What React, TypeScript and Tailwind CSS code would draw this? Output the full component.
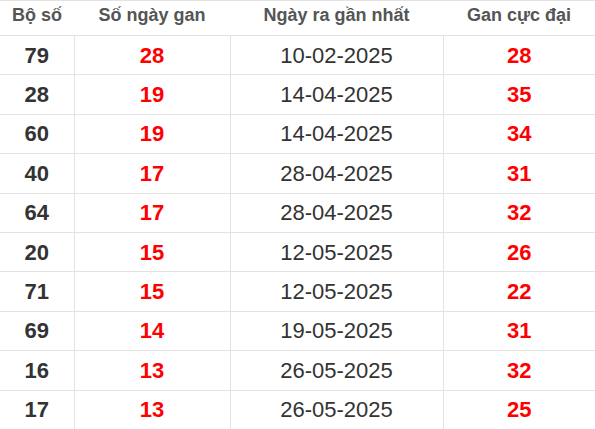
const rows = [
  ["79", "28", "10-02-2025", "28"],
  ["28", "19", "14-04-2025", "35"],
  ["60", "19", "14-04-2025", "34"],
  ["40", "17", "28-04-2025", "31"],
  ["64", "17", "28-04-2025", "32"],
  ["20", "15", "12-05-2025", "26"],
  ["71", "15", "12-05-2025", "22"],
  ["69", "14", "19-05-2025", "31"],
  ["16", "13", "26-05-2025", "32"],
  ["17", "13", "26-05-2025", "25"],
]

export default function App() {
  return (
    <div className="w-[595px] h-[429px] overflow-hidden bg-white font-['Liberation_Sans',Arial,sans-serif]">
      <table className="w-[595px] border-collapse table-fixed">
        <colgroup>
          <col className="w-[74px]" />
          <col className="w-[156px]" />
          <col className="w-[213px]" />
          <col className="w-[152px]" />
        </colgroup>
        <thead>
          <tr className="h-[35px] border-t border-b border-[#e3e3e3]">
            <th className="text-[18px] font-bold text-[#555] text-center align-middle pb-[6px]">Bộ số</th>
            <th className="text-[18px] font-bold text-[#555] text-center align-middle pb-[6px]">Số ngày gan</th>
            <th className="text-[18px] font-bold text-[#555] text-center align-middle pb-[6px]">Ngày ra gần nhất</th>
            <th className="text-[18px] font-bold text-[#555] text-center align-middle pb-[6px]">Gan cực đại</th>
          </tr>
        </thead>
        <tbody>
          {rows.map((r, i) => (
            <tr key={i} className="h-[39.4px] border-b border-[#e3e3e3]">
              <td className="text-center text-[22px] font-bold text-[#333]">{r[0]}</td>
              <td className="text-center text-[22px] font-bold text-[#ff0000] border-l border-[#e3e3e3]">{r[1]}</td>
              <td className="text-center text-[22px] text-[#333] border-l border-[#e3e3e3]">{r[2]}</td>
              <td className="text-center text-[22px] font-bold text-[#ff0000] border-l border-[#e3e3e3]">{r[3]}</td>
            </tr>
          ))}
        </tbody>
      </table>
    </div>
  )
}
